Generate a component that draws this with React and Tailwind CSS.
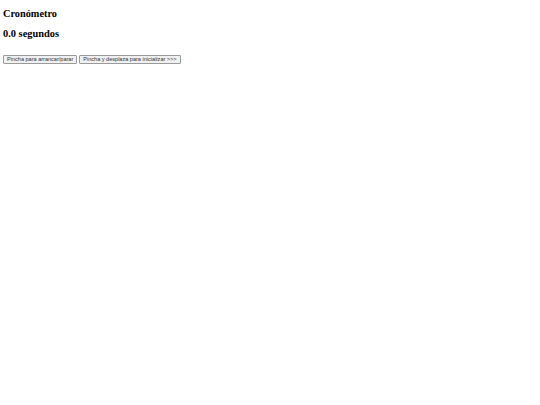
export default function App() {
  return (
    <div className="min-h-screen bg-white px-[3px] pt-[7px] text-black">
      <h3 className="font-['Liberation_Serif',serif] text-[10.3px] font-bold leading-[14px]">Cronómetro</h3>
      <h3 className="mt-[5px] font-['Liberation_Serif',serif] text-[10.4px] font-bold leading-[16px]">0.0 segundos</h3>
      <div className="mt-[13px] flex gap-[2px]">
        <button className="h-[9px] rounded-[1px] border border-[#9a9a9a] bg-[#f0f0f0] px-[3px] font-['Liberation_Sans',sans-serif] text-[5.55px] leading-[7px] text-[#333]">
          Pincha para arrancar/parar
        </button>
        <button className="h-[9px] rounded-[1px] border border-[#9a9a9a] bg-[#f0f0f0] px-[3px] font-['Liberation_Sans',sans-serif] text-[5.55px] leading-[7px] text-[#333]">
          Pincha y desplaza para inicializar &gt;&gt;&gt;
        </button>
      </div>
    </div>
  );
}
